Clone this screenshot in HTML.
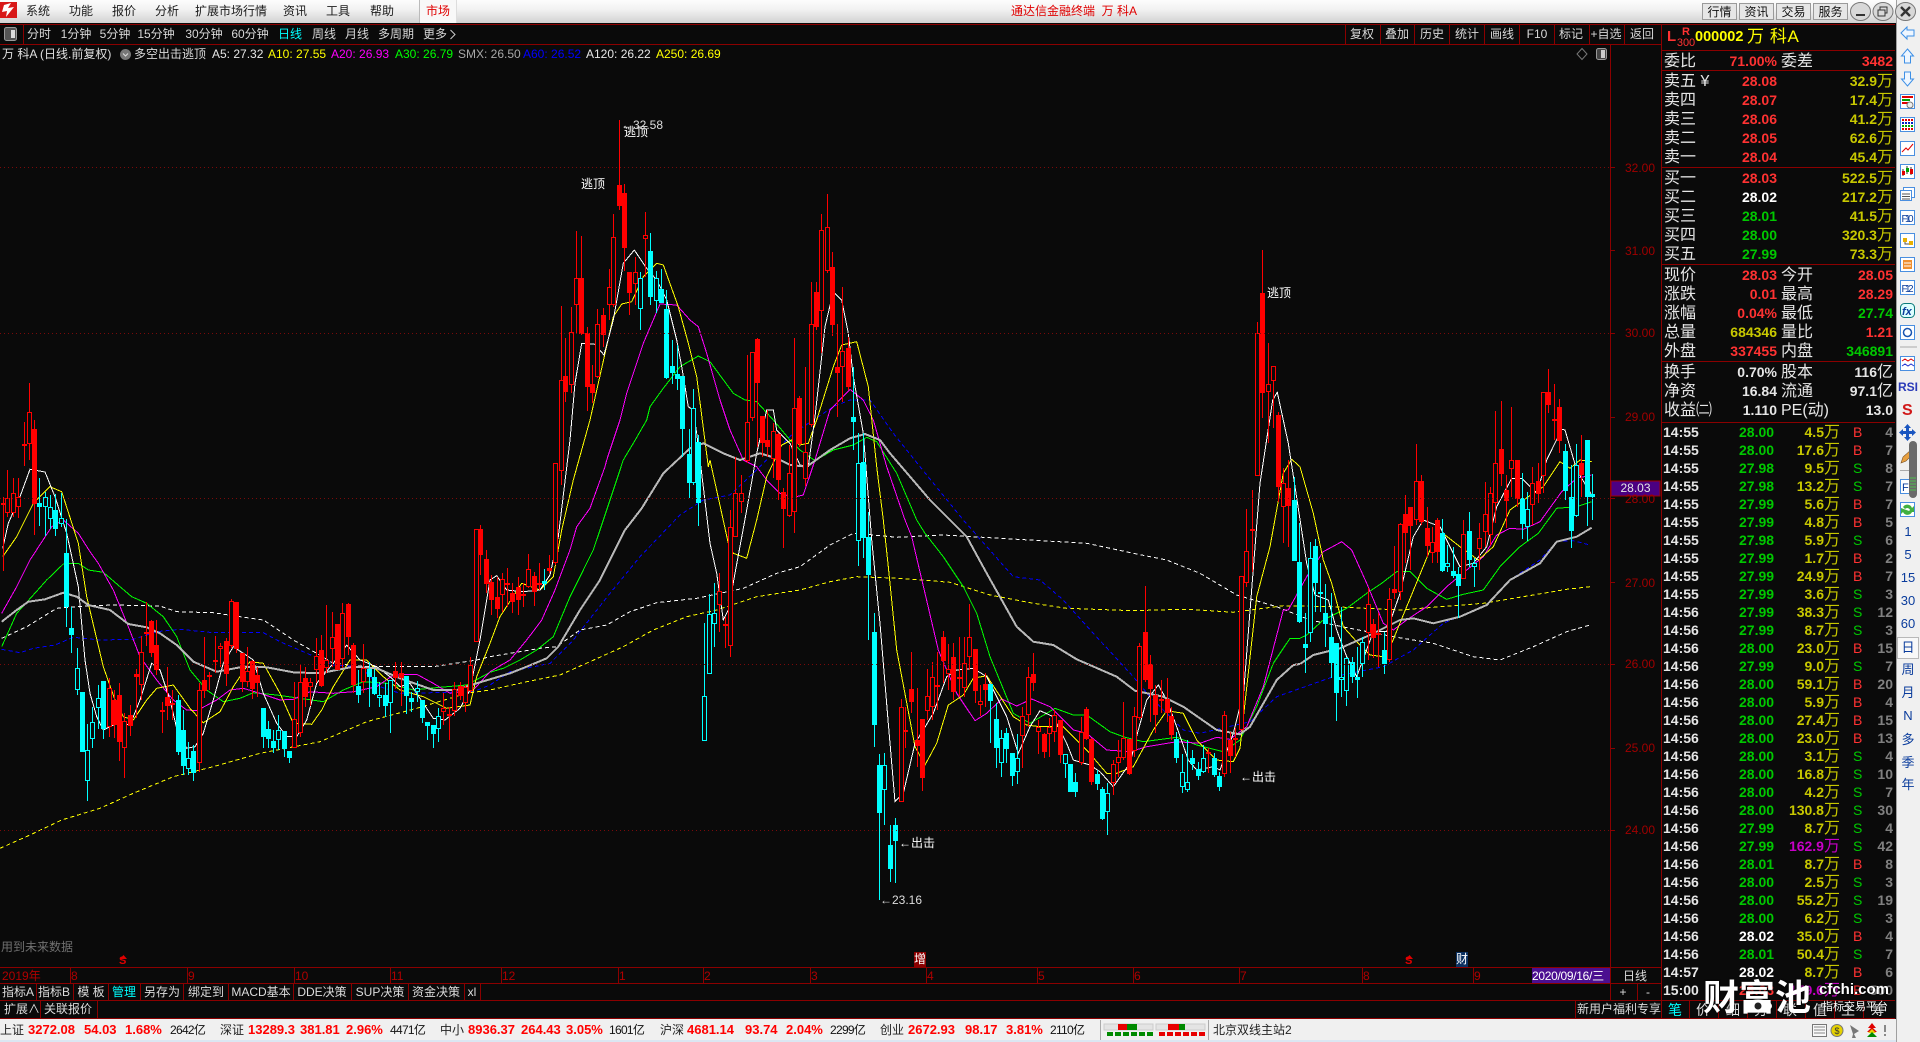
<!DOCTYPE html>
<html lang="zh"><head><meta charset="utf-8"><title>通达信金融终端 万科A</title>
<style>
html,body{margin:0;padding:0;width:1920px;height:1042px;overflow:hidden;background:#0a0a0a}
body{position:relative;font:12px/16px "Liberation Sans","WenQuanYi Zen Hei","Noto Sans CJK SC",sans-serif;color:#e0e0e0}
.x{position:absolute;white-space:nowrap;z-index:5}
.c{transform:translateX(-50%)}
#title{position:absolute;left:0;top:0;width:1920px;height:23px;background:linear-gradient(#fdfdfd,#f2f2f2 40%,#d2d2d2)}
.m{top:3px;color:#1a1a1a}
.tb{top:26px;color:#d8d8d8}
.tr{top:26px;color:#d8d8d8}
.btn{position:absolute;top:3px;height:17px;line-height:17px;text-align:center;background:#e6e6e6;border:1px solid #9a9a9a;box-sizing:border-box;color:#111;z-index:5}
.lg{top:46px}
.tab{top:984px;color:#dcdcdc}
.dt{top:968px;color:#b00000}
.ax{left:1625px;color:#a00000;font-size:12px}
.lb{font-size:16px;line-height:18px;color:#e6e6e6;margin-top:1px}
.q{font-size:14px;line-height:18px;font-weight:bold;color:#ff3232}
.pr{right:143px}.vr{right:27px}
.y{color:#c8c800}.g{color:#00c800}.w{color:#e6e6e6}.mg{color:#c800c8}
.q span{font-weight:normal;font-size:16px}
.t{position:absolute;left:1662px;width:233px;height:18px;font-size:14px;line-height:18px;font-weight:bold;z-index:5}
.t i,.t b,.t u,.t em,.t s{position:absolute;font-style:normal;text-decoration:none;white-space:nowrap}
.t i{left:1px;color:#e6e6e6}
.t b{left:77px;color:#00c800}
.t b.w{color:#fff}.t b.rd{color:#ff3232}
.t u{right:55px;color:#c8c800}
.t u.mg{color:#c800c8}
.t u span{font-weight:normal;font-size:16px}
.t em{left:191px;color:#ff3232;font-size:14px;font-weight:normal}
.t em.g{color:#00c800}
.t s{right:2px;color:#808080;font-weight:bold}
.lab{color:#fff;font-size:12px}
#status{position:absolute;left:0;top:1019px;width:1896px;height:21px;background:#f0f0f0}
#bot{position:absolute;left:0;top:1040px;width:1920px;height:2px;background:#dbe6f2}
.st{top:1022px;color:#222}
.sr{top:1022px;color:#f00;font-weight:bold;font-size:13px}
.sv{top:1022px;color:#111;letter-spacing:-.7px}
#side{position:absolute;left:1896px;top:0;width:24px;height:1042px;background:#f0f0f0;border-left:1px solid #a0a0a0;box-sizing:border-box}
.sd{left:1896px;width:24px;text-align:center;color:#0a3c9c;font-size:13px;z-index:6}
.tabb{top:1002px;color:#e0e0e0;font-size:14px}
.wm{color:#fff;z-index:9;text-shadow:0 0 2px #000}
</style></head><body>

<div id="title"></div>
<svg class="x" style="left:0;top:2px" width="17" height="16"><rect width="17" height="16" fill="#d81818"/><path d="M4 3L11 1L8 6L14 5L6 15L7 9L2 10Z" fill="#fff"/></svg>
<span class="x m c" style="left:38px">系统</span><span class="x m c" style="left:81px">功能</span><span class="x m c" style="left:124px">报价</span><span class="x m c" style="left:167px">分析</span><span class="x m c" style="left:231px">扩展市场行情</span><span class="x m c" style="left:295px">资讯</span><span class="x m c" style="left:338px">工具</span><span class="x m c" style="left:382px">帮助</span>
<div style="position:absolute;left:419px;top:0;width:38px;height:23px;background:#f8f8f8;border-left:1px solid #bbb;border-right:1px solid #ddd;box-sizing:border-box"></div>
<span class="x m c" style="left:438px;color:#e00000">市场</span>
<span class="x m" style="left:1011px;color:#e00000">通达信金融终端&nbsp;&nbsp;万 科A</span>
<div class="btn" style="left:1702px;width:35px">行情</div><div class="btn" style="left:1739px;width:35px">资讯</div><div class="btn" style="left:1776px;width:35px">交易</div><div class="btn" style="left:1813px;width:35px">服务</div>
<svg class="x" style="left:1849px;top:1px" width="70" height="22">
<ellipse cx="11.5" cy="10.5" rx="10" ry="9" fill="#d8d8d8" stroke="#777"/><rect x="7" y="13" width="9" height="2" fill="#333"/>
<ellipse cx="34" cy="10.5" rx="10" ry="9" fill="#d8d8d8" stroke="#777"/><rect x="31" y="6" width="7" height="6" fill="none" stroke="#333"/><rect x="29" y="9" width="7" height="6" fill="#d8d8d8" stroke="#333"/>
<ellipse cx="56.5" cy="10.5" rx="10" ry="9" fill="#d8d8d8" stroke="#777"/><path d="M52 6L61 15M61 6L52 15" stroke="#333" stroke-width="2.4"/></svg>

<svg id="chart" style="position:absolute;left:0;top:45px" width="1610" height="922" viewBox="0 45 1610 922"></svg>

<svg style="position:absolute;left:0;top:0;z-index:3" width="1896" height="1042" shape-rendering="crispEdges">
<path d="M0 167.5H1610M0 333.5H1610M0 498.5H1610M0 664.5H1610M0 830.5H1610" stroke="#7a0a0a" stroke-dasharray="1 3" fill="none"/>
<path fill="none" stroke="#8b0000" d="M0 24.5H1895M0 44.5H1661M23.5 24V44M1345.5 24V44M1380.5 24V44M1414.5 24V44M1449.5 24V44M1484.5 24V44M1519.5 24V44M1554.5 24V44M1589.5 24V44M1624.5 24V44M1610.5 44V1001M1661.5 24V1018M0 967.5H1661M0 983.5H1661M0 1000.5H1895M0 1018.5H1895M1661 50.5H1895M1661 70.5H1895M1661 167.5H1895M1661 264.5H1895M1661 361.5H1895M1661 422.5H1895M36.5 984V1000M73.5 984V1000M108.5 984V1000M140.5 984V1000M183.5 984V1000M228.5 984V1000M293.5 984V1000M351.5 984V1000M408.5 984V1000M464.5 984V1000M480.5 984V1000M40.5 1001V1018M97.5 1001V1018M1575.5 1001V1018M1637.5 984V1000M70.5 968V983M187.5 968V983M294.5 968V983M390.5 968V983M501.5 968V983M618.5 968V983M703.5 968V983M810.5 968V983M926.5 968V983M1037.5 968V983M1133.5 968V983M1239.5 968V983M1362.5 968V983M1473.5 968V983M1689.5 1001V1018M1718.5 1001V1018M1747.5 1001V1018M1776.5 1001V1018M1805.5 1001V1018M1834.5 1001V1018M1863.5 1001V1018M1610 167.5H1615M1610 250.5H1615M1610 333.5H1615M1610 417.5H1615M1610 498.5H1615M1610 582.5H1615M1610 664.5H1615M1610 748.5H1615M1610 830.5H1615"/>
<rect x="1532" y="968" width="78" height="15" fill="#4b0f90"/>
<rect x="1611" y="481" width="49" height="15" fill="#4b0082" stroke="#a00000"/>
</svg>

<svg class="x" style="left:4px;top:27px" width="14" height="14"><rect x=".5" y=".5" width="12" height="13" rx="2" fill="#555" stroke="#9a9a9a"/><rect x="7" y="3" width="4" height="8" fill="#ddd"/></svg>
<span class="x tb c" style="left:39px">分时</span><span class="x tb c" style="left:76px">1分钟</span><span class="x tb c" style="left:115px">5分钟</span><span class="x tb c" style="left:156px">15分钟</span><span class="x tb c" style="left:204px">30分钟</span><span class="x tb c" style="left:250px">60分钟</span><span class="x tb c" style="left:290px;color:#00ffff">日线</span><span class="x tb c" style="left:324px">周线</span><span class="x tb c" style="left:357px">月线</span><span class="x tb c" style="left:396px">多周期</span><span class="x tb c" style="left:435px">更多</span>
<svg class="x" style="left:449px;top:29px" width="8" height="11"><path d="M1.500 1L6 5.500L1.500 10" stroke="#ccc" fill="none"/></svg>
<span class="x tr c" style="left:1362px">复权</span><span class="x tr c" style="left:1397px">叠加</span><span class="x tr c" style="left:1432px">历史</span><span class="x tr c" style="left:1467px">统计</span><span class="x tr c" style="left:1502px">画线</span><span class="x tr c" style="left:1537px">F10</span><span class="x tr c" style="left:1571px">标记</span><span class="x tr c" style="left:1606px">+自选</span><span class="x tr c" style="left:1642px">返回</span>

<span class="x lg" style="left:2px;color:#e0e0e0">万 科A (日线.前复权)</span>
<svg class="x" style="left:119px;top:48px" width="13" height="13"><circle cx="6.500" cy="6.500" r="5.500" fill="#777"/><path d="M4 5.500L6.500 8L9 5.500" stroke="#ddd" fill="none"/></svg>
<span class="x lg" style="left:134px;color:#d8d8d8">多空出击逃顶</span>
<span class="x lg" style="left:212px;color:#e6e6e6">A5: 27.32</span><span class="x lg" style="left:268px;color:#ff0">A10: 27.55</span><span class="x lg" style="left:331px;color:#f0f">A20: 26.93</span><span class="x lg" style="left:395px;color:#0f0">A30: 26.79</span><span class="x lg" style="left:458px;color:#a8a8a8">SMX: 26.50</span><span class="x lg" style="left:523px;color:#00f">A60: 26.52</span><span class="x lg" style="left:586px;color:#e6e6e6">A120: 26.22</span><span class="x lg" style="left:656px;color:#ff0">A250: 26.69</span>
<svg class="x" style="left:1576px;top:47px" width="34" height="14"><path d="M6 1.500L11 7L6 12.500L1 7Z" fill="none" stroke="#777"/><rect x="20.500" y="1.500" width="10" height="11" rx="2" fill="#444" stroke="#999"/><rect x="25" y="3" width="4" height="8" fill="#ccc"/></svg>

<span class="x ax" style="top:160px">32.00</span><span class="x ax" style="top:243px">31.00</span><span class="x ax" style="top:325px">30.00</span><span class="x ax" style="top:409px">29.00</span><span class="x ax" style="top:491px">28.00</span><span class="x ax" style="top:575px">27.00</span><span class="x ax" style="top:656px">26.00</span><span class="x ax" style="top:740px">25.00</span><span class="x ax" style="top:822px">24.00</span>
<span class="x" style="left:1611px;top:480px;width:49px;text-align:center;color:#e6e6e6">28.03</span>

<span class="x lab" style="left:581px;top:176px">逃顶</span><span class="x lab" style="left:624px;top:124px">逃顶</span><span class="x lab" style="left:621px;top:117px;color:#ddd">←32.58</span><span class="x lab" style="left:1267px;top:285px">逃顶</span><span class="x lab" style="left:899px;top:835px">←出击</span><span class="x lab" style="left:1240px;top:769px">←出击</span><span class="x lab" style="left:880px;top:892px;color:#ddd">←23.16</span>
<span class="x" style="left:1px;top:939px;color:#707070">用到未来数据</span>

<span class="x" style="left:119px;top:955px;color:#e00000;font-weight:bold;font-size:11px;line-height:12px">S</span><svg class="x" style="left:120px;top:955px" width="7" height="4"><path d="M0 4L3.500 0L7 4Z" fill="#e00000"/></svg>
<span class="x" style="left:914px;top:952px;background:#8b0000;color:#fff;height:15px;line-height:15px">增</span>
<span class="x" style="left:1405px;top:955px;color:#e00000;font-weight:bold;font-size:11px;line-height:12px">S</span><svg class="x" style="left:1406px;top:955px" width="7" height="4"><path d="M0 4L3.500 0L7 4Z" fill="#e00000"/></svg>
<span class="x" style="left:1456px;top:952px;background:#0a3060;color:#fff;height:15px;line-height:15px">财</span>

<span class="x dt" style="left:2px">2019年</span><span class="x dt" style="left:71px">8</span><span class="x dt" style="left:188px">9</span><span class="x dt" style="left:295px">10</span><span class="x dt" style="left:391px">11</span><span class="x dt" style="left:502px">12</span><span class="x dt" style="left:619px">1</span><span class="x dt" style="left:704px">2</span><span class="x dt" style="left:811px">3</span><span class="x dt" style="left:927px">4</span><span class="x dt" style="left:1038px">5</span><span class="x dt" style="left:1134px">6</span><span class="x dt" style="left:1240px">7</span><span class="x dt" style="left:1363px">8</span><span class="x dt" style="left:1474px">9</span>
<span class="x" style="left:1532px;top:968px;color:#fff;letter-spacing:-.3px">2020/09/16/三</span><span class="x c" style="left:1635px;top:968px;color:#ddd">日线</span>
<span class="x tab" style="left:2px">指标A</span><span class="x tab" style="left:38px">指标B</span><span class="x tab c" style="left:91px">模 板</span><span class="x tab c" style="left:124px;color:#00ffff">管理</span><span class="x tab c" style="left:162px">另存为</span><span class="x tab c" style="left:206px">绑定到</span><span class="x tab c" style="left:261px">MACD基本</span><span class="x tab c" style="left:322px">DDE决策</span><span class="x tab c" style="left:380px">SUP决策</span><span class="x tab c" style="left:436px">资金决策</span><span class="x tab c" style="left:472px">xl</span>
<span class="x c" style="left:1623px;top:984px;color:#ddd">+</span><span class="x c" style="left:1648px;top:984px;color:#ddd">-</span>
<span class="x" style="left:4px;top:1001px;color:#dcdcdc">扩展∧</span><span class="x" style="left:44px;top:1001px;color:#dcdcdc">关联报价</span><span class="x" style="left:1577px;top:1001px;color:#dcdcdc">新用户福利专享</span>

<span class="x" style="left:1667px;top:29px;color:#ff3232;font-size:15px;font-weight:bold">L</span>
<span class="x c" style="left:1686px;top:24px;color:#ff3232;font-weight:bold;font-size:11px">R</span><span class="x c" style="left:1686px;top:35px;color:#ff3232;font-size:11px">300</span>
<span class="x" style="left:1695px;top:29px;color:#ff0;font-size:14.500px;font-weight:bold">000002</span><span class="x" style="left:1747px;top:28px;color:#ff0;font-size:17px;line-height:18px;letter-spacing:.6px">万 科A</span>

<span class="x lb" style="left:1664px;top:52px">委比</span><span class="x q pr" style="top:52px">71.00%</span><span class="x lb" style="left:1781px;top:52px">委差</span><span class="x q vr" style="top:52px">3482</span>
<span class="x lb" style="left:1664px;top:72px">卖五 ¥</span><span class="x q pr" style="top:72px">28.08</span><span class="x q vr y" style="top:72px">32.9<span>万</span></span>
<span class="x lb" style="left:1664px;top:91px">卖四</span><span class="x q pr" style="top:91px">28.07</span><span class="x q vr y" style="top:91px">17.4<span>万</span></span>
<span class="x lb" style="left:1664px;top:110px">卖三</span><span class="x q pr" style="top:110px">28.06</span><span class="x q vr y" style="top:110px">41.2<span>万</span></span>
<span class="x lb" style="left:1664px;top:129px">卖二</span><span class="x q pr" style="top:129px">28.05</span><span class="x q vr y" style="top:129px">62.6<span>万</span></span>
<span class="x lb" style="left:1664px;top:148px">卖一</span><span class="x q pr" style="top:148px">28.04</span><span class="x q vr y" style="top:148px">45.4<span>万</span></span>
<span class="x lb" style="left:1664px;top:169px">买一</span><span class="x q pr" style="top:169px">28.03</span><span class="x q vr y" style="top:169px">522.5<span>万</span></span>
<span class="x lb" style="left:1664px;top:188px">买二</span><span class="x q pr w" style="top:188px;color:#fff">28.02</span><span class="x q vr y" style="top:188px">217.2<span>万</span></span>
<span class="x lb" style="left:1664px;top:207px">买三</span><span class="x q pr g" style="top:207px">28.01</span><span class="x q vr y" style="top:207px">41.5<span>万</span></span>
<span class="x lb" style="left:1664px;top:226px">买四</span><span class="x q pr g" style="top:226px">28.00</span><span class="x q vr y" style="top:226px">320.3<span>万</span></span>
<span class="x lb" style="left:1664px;top:245px">买五</span><span class="x q pr g" style="top:245px">27.99</span><span class="x q vr y" style="top:245px">73.3<span>万</span></span>
<span class="x lb" style="left:1664px;top:266px">现价</span><span class="x q pr" style="top:266px">28.03</span><span class="x lb" style="left:1781px;top:266px">今开</span><span class="x q vr" style="top:266px">28.05</span>
<span class="x lb" style="left:1664px;top:285px">涨跌</span><span class="x q pr" style="top:285px">0.01</span><span class="x lb" style="left:1781px;top:285px">最高</span><span class="x q vr" style="top:285px">28.29</span>
<span class="x lb" style="left:1664px;top:304px">涨幅</span><span class="x q pr" style="top:304px">0.04%</span><span class="x lb" style="left:1781px;top:304px">最低</span><span class="x q vr g" style="top:304px">27.74</span>
<span class="x lb" style="left:1664px;top:323px">总量</span><span class="x q pr y" style="top:323px">684346</span><span class="x lb" style="left:1781px;top:323px">量比</span><span class="x q vr" style="top:323px">1.21</span>
<span class="x lb" style="left:1664px;top:342px">外盘</span><span class="x q pr" style="top:342px">337455</span><span class="x lb" style="left:1781px;top:342px">内盘</span><span class="x q vr g" style="top:342px">346891</span>
<span class="x lb" style="left:1664px;top:363px">换手</span><span class="x q pr w" style="top:363px">0.70%</span><span class="x lb" style="left:1781px;top:363px">股本</span><span class="x q vr w" style="top:363px">116<span>亿</span></span>
<span class="x lb" style="left:1664px;top:382px">净资</span><span class="x q pr w" style="top:382px">16.84</span><span class="x lb" style="left:1781px;top:382px">流通</span><span class="x q vr w" style="top:382px">97.1<span>亿</span></span>
<span class="x lb" style="left:1664px;top:401px">收益㈡</span><span class="x q pr w" style="top:401px">1.110</span><span class="x lb" style="left:1781px;top:401px">PE(动)</span><span class="x q vr w" style="top:401px">13.0</span>

<div class="t" style="top:423px"><i>14:55</i><b>28.00</b><u>4.5<span>万</span></u><em>B</em><s>4</s></div>
<div class="t" style="top:441px"><i>14:55</i><b>28.00</b><u>17.6<span>万</span></u><em>B</em><s>7</s></div>
<div class="t" style="top:459px"><i>14:55</i><b>27.98</b><u>9.5<span>万</span></u><em class="g">S</em><s>8</s></div>
<div class="t" style="top:477px"><i>14:55</i><b>27.98</b><u>13.2<span>万</span></u><em class="g">S</em><s>7</s></div>
<div class="t" style="top:495px"><i>14:55</i><b>27.99</b><u>5.6<span>万</span></u><em>B</em><s>7</s></div>
<div class="t" style="top:513px"><i>14:55</i><b>27.99</b><u>4.8<span>万</span></u><em>B</em><s>5</s></div>
<div class="t" style="top:531px"><i>14:55</i><b>27.98</b><u>5.9<span>万</span></u><em class="g">S</em><s>6</s></div>
<div class="t" style="top:549px"><i>14:55</i><b>27.99</b><u>1.7<span>万</span></u><em>B</em><s>2</s></div>
<div class="t" style="top:567px"><i>14:55</i><b>27.99</b><u>24.9<span>万</span></u><em>B</em><s>7</s></div>
<div class="t" style="top:585px"><i>14:55</i><b>27.99</b><u>3.6<span>万</span></u><em class="g">S</em><s>3</s></div>
<div class="t" style="top:603px"><i>14:56</i><b>27.99</b><u>38.3<span>万</span></u><em class="g">S</em><s>12</s></div>
<div class="t" style="top:621px"><i>14:56</i><b>27.99</b><u>8.7<span>万</span></u><em class="g">S</em><s>3</s></div>
<div class="t" style="top:639px"><i>14:56</i><b>28.00</b><u>23.0<span>万</span></u><em>B</em><s>15</s></div>
<div class="t" style="top:657px"><i>14:56</i><b>27.99</b><u>9.0<span>万</span></u><em class="g">S</em><s>7</s></div>
<div class="t" style="top:675px"><i>14:56</i><b>28.00</b><u>59.1<span>万</span></u><em>B</em><s>20</s></div>
<div class="t" style="top:693px"><i>14:56</i><b>28.00</b><u>5.9<span>万</span></u><em>B</em><s>4</s></div>
<div class="t" style="top:711px"><i>14:56</i><b>28.00</b><u>27.4<span>万</span></u><em>B</em><s>15</s></div>
<div class="t" style="top:729px"><i>14:56</i><b>28.00</b><u>23.0<span>万</span></u><em>B</em><s>13</s></div>
<div class="t" style="top:747px"><i>14:56</i><b>28.00</b><u>3.1<span>万</span></u><em class="g">S</em><s>4</s></div>
<div class="t" style="top:765px"><i>14:56</i><b>28.00</b><u>16.8<span>万</span></u><em class="g">S</em><s>10</s></div>
<div class="t" style="top:783px"><i>14:56</i><b>28.00</b><u>4.2<span>万</span></u><em class="g">S</em><s>7</s></div>
<div class="t" style="top:801px"><i>14:56</i><b>28.00</b><u>130.8<span>万</span></u><em class="g">S</em><s>30</s></div>
<div class="t" style="top:819px"><i>14:56</i><b>27.99</b><u>8.7<span>万</span></u><em class="g">S</em><s>4</s></div>
<div class="t" style="top:837px"><i>14:56</i><b>27.99</b><u class="mg">162.9<span>万</span></u><em class="g">S</em><s>42</s></div>
<div class="t" style="top:855px"><i>14:56</i><b>28.01</b><u>8.7<span>万</span></u><em>B</em><s>8</s></div>
<div class="t" style="top:873px"><i>14:56</i><b>28.00</b><u>2.5<span>万</span></u><em class="g">S</em><s>3</s></div>
<div class="t" style="top:891px"><i>14:56</i><b>28.00</b><u>55.2<span>万</span></u><em class="g">S</em><s>19</s></div>
<div class="t" style="top:909px"><i>14:56</i><b>28.00</b><u>6.2<span>万</span></u><em class="g">S</em><s>3</s></div>
<div class="t" style="top:927px"><i>14:56</i><b class="w">28.02</b><u>35.0<span>万</span></u><em>B</em><s>4</s></div>
<div class="t" style="top:945px"><i>14:56</i><b>28.01</b><u>50.4<span>万</span></u><em class="g">S</em><s>7</s></div>
<div class="t" style="top:963px"><i>14:57</i><b class="w">28.02</b><u>8.7<span>万</span></u><em>B</em><s>6</s></div>
<div class="t" style="top:981px"><i>15:00</i><b class="rd">28.03</b><u class="mg">179.6<span>万</span></u><em>B</em><s>500</s></div>

<span class="x tabb c" style="left:1675px;color:#00ffff">笔</span><span class="x tabb c" style="left:1703px">价</span><span class="x tabb c" style="left:1733px">细</span><span class="x tabb c" style="left:1761px">分</span><span class="x tabb c" style="left:1790px">联</span><span class="x tabb c" style="left:1820px">值</span><span class="x tabb c" style="left:1848px">主</span><span class="x tabb c" style="left:1878px">筹</span>

<span class="x wm" style="left:1703px;top:972px;font:bold 36px/46px 'Noto Sans CJK SC',sans-serif">财富池</span>
<svg class="x" style="left:1743px;top:999px;z-index:9" width="30" height="14"><ellipse cx="15" cy="7" rx="14" ry="6.500" fill="#fff"/><circle cx="15" cy="7" r="3.500" fill="#222"/></svg>
<span class="x wm" style="left:1819px;top:981px;font:bold 15px/18px 'Liberation Sans',sans-serif">cfchi.com</span>
<span class="x wm" style="left:1822px;top:1000px;font-size:11px;line-height:14px">指标交易平台</span>

<div id="status"></div><div id="bot"></div>
<span class="x st" style="left:0">上证</span><span class="x sr" style="left:28px">3272.08</span><span class="x sr" style="left:84px">54.03</span><span class="x sr" style="left:125px">1.68%</span><span class="x sv" style="left:170px">2642亿</span>
<span class="x st" style="left:220px">深证</span><span class="x sr" style="left:248px">13289.3</span><span class="x sr" style="left:300px">381.81</span><span class="x sr" style="left:346px">2.96%</span><span class="x sv" style="left:390px">4471亿</span>
<span class="x st" style="left:440px">中小</span><span class="x sr" style="left:468px">8936.37</span><span class="x sr" style="left:521px">264.43</span><span class="x sr" style="left:566px">3.05%</span><span class="x sv" style="left:609px">1601亿</span>
<span class="x st" style="left:660px">沪深</span><span class="x sr" style="left:687px">4681.14</span><span class="x sr" style="left:745px">93.74</span><span class="x sr" style="left:786px">2.04%</span><span class="x sv" style="left:830px">2299亿</span>
<span class="x st" style="left:880px">创业</span><span class="x sr" style="left:908px">2672.93</span><span class="x sr" style="left:965px">98.17</span><span class="x sr" style="left:1006px">3.81%</span><span class="x sv" style="left:1050px">2110亿</span>
<span class="x st" style="left:1213px">北京双线主站2</span>
<svg class="x" style="left:1100px;top:1020px" width="110" height="20" shape-rendering="crispEdges">
<path d="M.5 0V20M108.500 0V20" stroke="#aaa"/>
<rect x="4" y="4" width="49" height="6" fill="#e4e4e4" stroke="#ccc"/><rect x="18" y="4" width="9" height="6" fill="#e80000"/><rect x="27" y="4" width="10" height="6" fill="#008a00"/>
<rect x="56" y="4" width="49" height="6" fill="#e4e4e4" stroke="#ccc"/><rect x="68" y="4" width="11" height="6" fill="#e80000"/><rect x="79" y="4" width="6" height="6" fill="#008a00"/>
<path d="M7 14H53" stroke="#008a00" stroke-width="4" stroke-dasharray="6 2"/><path d="M59 14H105" stroke="#e80000" stroke-width="4" stroke-dasharray="6 2"/></svg>
<svg class="x" style="left:1810px;top:1022px" width="82" height="18">
<rect x="2.500" y="2.500" width="14" height="12" fill="#f8f8f8" stroke="#777"/><path d="M4 5H15M4 8H15M4 11H15" stroke="#888"/>
<circle cx="27" cy="8.500" r="6" fill="#e6d200" stroke="#777"/><text x="24.500" y="12" font-size="9" fill="#333" font-family="Liberation Sans">$</text>
<path d="M40 3L49 9L44 12L46 16H42L43 12Z" fill="#777"/>
<path d="M62 1L66 6H58ZM62 5L67 10H57Z" fill="#e00000"/><path d="M62 7L66 11H58Z" fill="#e8d000"/><path d="M62 10L67 15H57Z" fill="#008a00"/>
<rect x="74" y="3" width="2" height="7" fill="#888"/><rect x="74" y="12" width="2" height="2" fill="#888"/></svg>

<div id="side"></div>
<svg class="x" style="left:1896px;top:0;z-index:6" width="24" height="1042" font-family="Liberation Sans">
<g fill="#eef6ff" stroke="#3d8fe6"><path d="M5 33L11 27V30H18V36H11V39Z"/><path d="M11.500 49L17.500 56H14.500V63H8.500V56H5.500Z"/><path d="M8.500 72H14.500V79H17.500L11.500 86L5.500 79H8.500Z"/></g>
<g fill="#fff" stroke="#4a8fe0"><rect x="4.500" y="94.500" width="14" height="14"/><rect x="4.500" y="117.500" width="14" height="14"/><rect x="4.500" y="141.500" width="14" height="14"/><rect x="4.500" y="164.500" width="14" height="14"/><rect x="7.500" y="187.500" width="11" height="10"/><rect x="4.500" y="190.500" width="11" height="10"/><rect x="4.500" y="210.500" width="14" height="14"/><rect x="4.500" y="233.500" width="14" height="14"/><rect x="4.500" y="257.500" width="14" height="14"/><rect x="4.500" y="280.500" width="14" height="14"/><rect x="4.500" y="325.500" width="14" height="14"/><rect x="4.500" y="356.500" width="14" height="14"/><rect x="4.500" y="479.500" width="14" height="14"/><rect x="4.500" y="502.500" width="14" height="14"/></g>
<path d="M6 97H17" stroke="#e00000" stroke-width="2"/><path d="M6 100H14" stroke="#00a000" stroke-width="2"/><path d="M6 103H12" stroke="#e00000" stroke-width="2"/><circle cx="14" cy="105" r="3" fill="#eee" stroke="#777"/>
<path d="M6 120H17" stroke="#e00000" stroke-width="2" stroke-dasharray="2 1"/><path d="M6 123H17" stroke="#0020c0" stroke-width="2" stroke-dasharray="2 1"/><path d="M6 126H17" stroke="#00a000" stroke-width="2" stroke-dasharray="2 1"/><path d="M6 129H17" stroke="#e00000" stroke-width="2" stroke-dasharray="2 1"/>
<path d="M6 152L10 148L12 150L17 144" stroke="#e00000" fill="none"/>
<path d="M7 169V176M11 166V174M15 167V175" stroke="#333"/><rect x="6" y="171" width="3" height="4" fill="#e00000"/><rect x="10" y="168" width="3" height="4" fill="#00a000"/><rect x="14" y="169" width="3" height="5" fill="#e00000"/>
<path d="M6 194H14M6 196.500H14M6 199H14" stroke="#555"/>
<text x="5.500" y="222" font-size="10" fill="#0a3c9c" textLength="12">F10</text>
<path d="M7 238H11V242H7ZM13 241H17V245H13Z" fill="#e8b000"/><path d="M9 242V244H13" stroke="#555" fill="none"/>
<rect x="7" y="260" width="9" height="9" fill="#f09030"/><path d="M8 263H15M8 266H15" stroke="#fff"/>
<text x="5.500" y="292" font-size="10" fill="#0a3c9c" textLength="12">F12</text>
<rect x="4.500" y="303.500" width="14" height="14" rx="4" fill="#dff" stroke="#0a7a7a"/><text x="6" y="315" font-size="11" font-style="italic" font-weight="bold" fill="#0a3c9c">fx</text>
<circle cx="11.500" cy="332.500" r="4" fill="none" stroke="#1a55b0" stroke-width="1.500"/>
<path d="M4 347H21M4 470.500H21" stroke="#aaa"/>
<path d="M6 361L9 359L12 361L15 359L18 361" stroke="#e00000" fill="none"/><path d="M6 366L9 364L12 366L15 364L18 366" stroke="#2030d0" fill="none"/>
<text x="2" y="391" font-size="12" font-weight="bold" fill="#2a3ab8">RSI</text>
<text x="6" y="415" font-size="16" font-weight="bold" fill="#d01818">S</text>
<path d="M11.500 424L15 428H13V431H16V429L20 432.500L16 436V434H13V437H15L11.500 441L8 437H10V434H7V436L3 432.500L7 429V431H10V428H8Z" fill="#1a55c0"/>
<path d="M5 463L7 457L16 449L19 452L10 461Z" fill="#e8a040" stroke="#7a5020" stroke-width=".6"/>
<text x="6" y="491" font-size="11" fill="#0a3c9c">F5</text>
<path d="M7 507A5 5 0 0 1 16 508L18 506V512H12L14 510A3 3 0 0 0 9 509ZM16 512A5 5 0 0 1 7 512L5 514V508" fill="#40b040"/>
<rect x="13" y="441" width="8" height="57" rx="4" fill="#6a6a6a"/><path d="M14 478H20M14 481H20M14 484H20M14 487H20M14 490H20" stroke="#50c050"/>
<rect x="1.500" y="637.500" width="21" height="21" fill="#f8f8f8" stroke="#b8b8b8"/>
</svg>
<span class="x sd" style="top:524px">1</span><span class="x sd" style="top:547px">5</span><span class="x sd" style="top:570px">15</span><span class="x sd" style="top:593px">30</span><span class="x sd" style="top:616px">60</span><span class="x sd" style="top:640px">日</span><span class="x sd" style="top:662px">周</span><span class="x sd" style="top:685px">月</span><span class="x sd" style="top:708px">N</span><span class="x sd" style="top:732px">多</span><span class="x sd" style="top:755px">季</span><span class="x sd" style="top:777px">年</span>

<script>
(function(){
var S={a:[0,400],b:[500,100],c:[800,500],d:[1200,230],e:[490,420]};
var BARS=[
["a","r8,292,310,313,512 h22,210,295,338,350 h39,235,280,338,350 h55,235,290,320,355 r71,65,132,136,197 h88,-50,37,133,180 r103,60,87,312,405 c118,235,309,321,378 n136,275,292,322,408 n150,285,322,358,388 c165,283,330,387,408 n184,280,355,373,380 c199,358,460,620,680 c214,620,684,704,758 n232,745,805,870,885 c247,876,876,1055,1055 n262,972,1051,1144,1202 n277,920,967,1018,1043 n295,855,895,925,987 c310,843,843,986,1016 h326,835,865,980,1010 r343,870,900,975,1015 r358,850,885,1025,1082 h373,940,962,1045,1133 r391,915,945,977,1007 r407,808,822,830,955 h422,708,757,854,900 r439,607,696,700,738 r454,660,663,758,770 r469,660,736,810,825 r487,905,930,934,998 r502,800,892,918,960 r517,870,908,911,960 c535,885,900,1055,1065 c550,930,990,1097,1125 n565,1025,1075,1108,1125 c580,1035,1053,1120,1143 h598,850,871,1090,1115 r613,710,840,872,895 r628,815,825,830,870 r646,708,781,784,820 h661,730,738,748,800 r677,715,724,821,858 h694,598,604,738,745 r708,605,606,747,760 r725,760,760,845,875 h742,740,813,845,860 r757,780,783,866,898 r772,800,825,850,890 c790,924,924,1010,1043 c805,963,987,1017,1045 c820,990,1023,1044,1058 n835,945,991,1021,1050 c853,993,993,1047,1072 c868,1053,1053,1074,1090 h883,845,958,1045,1045 h901,793,847,1000,1010 r916,800,835,892,920 h931,835,845,862,918 h949,715,768,811,850 r964,705,750,857,860 h979,615,780,805,820 h997,635,712,748,800 r1012,672,672,810,810 h1027,610,640,778,805 r1045,610,612,710,765 r1060,728,736,854,878 c1075,810,858,885,908 h1090,733,805,845,880 c1108,785,806,832,920 c1123,808,832,882,885 n1138,845,885,893,920 c1156,850,885,917,950 n1171,840,840,908,998 r1186,787,813,835,868 r1204,787,820,835,918 c1219,828,828,888,942 c1234,875,894,906,937 n1252,843,863,876,905 c1267,900,900,953,968 c1282,966,966,977,1020 c1300,975,975,1002,1044 n1315,925,948,988,1027 h1330,880,925,937,975 r1346,920,943,947,1020 h1363,845,868,932,948 r1379,845,858,888,900 h1394,855,860,910,935 h1411,770,795,873,880 h1427,388,388,725,725 r1441,375,388,464,525 r1459,450,477,551,580 r1474,525,545,600,645 r1490,530,591,627,655"],
["e","h37,460,478,524,575 r52,445,490,495,560 r67,490,520,545,578 r85,470,502,540,586 r100,490,521,524,560 h115,403,447,500,505 r133,455,468,515,557 r148,430,490,494,510 c163,447,483,491,510 r178,405,444,452,460 h196,130,130,430,435"],
["b","h182,618,841,1114,1155 r196,714,828,875,905 h214,622,697,854,878 h229,393,535,616,700 r244,408,535,701,705 r262,680,699,860,933 r277,795,852,880,908 h292,628,673,830,835 r310,625,645,705,740 h326,507,562,616,660 h340,342,412,616,620 r358,60,255,317,330 r373,252,279,443,512 r388,516,516,578,645 h404,472,515,553,615 n421,515,535,628,690 h436,336,406,418,530 c451,400,453,590,615 n469,512,535,604,640 c484,508,568,608,610 c499,570,628,835,838 c517,720,798,820,852 c532,735,822,838,870 c547,829,829,987,1070 c566,988,1062,1150,1193 n580,868,925,1150,1155"],
["e","c625,45,65,248,318 n643,610,828,964,964 n658,522,583,763,763 n673,490,580,611,680 h688,460,514,554,635 r706,590,612,617,685 h721,270,322,677,710 h736,110,220,352,352 h754,165,220,245,280"],
["b","h740,765,965,1083,1090 h755,755,755,953,962 r772,715,718,849,1040 r787,948,948,1028,1072 r802,930,1020,1040,1070 h820,970,992,1076,1135 r835,1000,1002,1140,1200 r850,1165,1176,1226,1345 h868,1035,1120,1247,1250 h883,714,925,1237,1300 r898,888,893,1033,1040 h914,800,1055,1138,1158 h932,545,673,976,980 r947,545,576,680,690 h962,342,391,634,760 h980,282,382,512,520 r995,457,502,675,708 r1010,672,802,820,950 h1027,562,754,802,905 r1043,710,744,862,870 c1058,800,950,966,1050"],
["c","n175,-200,-110,122,198 c190,-200,-114,115,174 c205,37,112,224,420 c222,340,396,675,742 c238,763,796,938,1200 n253,760,796,871,975 c271,975,1036,1108,1145 c286,955,976,1022,1150 h302,598,622,907,907 r316,620,691,697,745 r334,457,568,605,640 r350,565,720,738,800 r365,657,657,833,872 h382,507,589,633,660 h397,485,530,622,660 r412,455,555,559,630 r430,393,412,483,550 h445,432,508,523,570 r460,430,472,575,600 h478,410,530,538,590 h493,412,488,563,590 h508,312,412,472,510 r526,447,447,572,610 h541,555,602,615,648 r556,518,552,569,620 c571,552,552,602,730 c589,610,658,743,805 n604,690,715,790,830 c619,685,700,746,790 c637,760,760,827,858 n652,703,775,817,853 h667,620,649,709,803 h685,502,532,646,680 r700,460,523,548,572 h715,660,682,697,762 r733,700,702,755,775 h748,655,682,703,770 h763,630,644,697,725 r781,660,660,765,790 n796,763,763,793,835 c811,793,793,875,875 c826,818,845,875,890 h844,650,695,790,795 r859,622,628,716,720 r874,715,717,847,855 c892,810,823,851,870 c907,860,868,957,960 n922,850,880,937,1005 h940,780,791,850,885 h955,720,772,790,830 h970,605,713,775,780 r988,718,718,821,825 h1003,620,647,752,770 h1018,430,438,653,660 r1036,258,397,540,545 r1051,465,493,567,665 r1066,555,586,644,700 r1084,540,597,602,640 r1100,535,598,638,665 r1114,620,649,705,720 c1129,695,718,773,790 n1147,763,817,862,880 n1162,720,847,871,875 c1177,750,775,792,810 c1195,785,808,827,840 n1210,735,775,815,820 r1225,745,755,759,820 c1243,760,775,825,830 c1258,815,828,860,872 h1273,633,646,823,830 r1291,695,720,768,820 h1306,685,713,720,770"],
["d","h122,1037,1037,1500,1500 h139,838,962,1060,1070 r155,780,896,900,1025 h170,277,310,737,737 r185,60,190,488,565 h203,340,463,487,640 h218,407,407,452,595 r233,545,556,770,815 h250,715,760,832,940 r265,690,775,827,950 c281,742,810,992,992 c298,880,996,1175,1178 c314,1150,1243,1253,1328 n329,935,985,1210,1235 c346,928,949,1058,1145 c361,1000,1086,1090,1145 c376,1062,1150,1182,1250 c394,1090,1222,1300,1345 c409,1238,1240,1388,1472 n424,1130,1340,1350,1400 n439,1280,1283,1382,1427 c457,1280,1297,1340,1358 c472,1250,1340,1350,1403 n487,1222,1237,1303,1340 h505,1075,1123,1208,1290 r520,1168,1183,1223,1285 r535,1150,1210,1214,1310 c553,1205,1260,1302,1332 h568,1075,1108,1289,1295 r583,948,1077,1090,1108 h601,880,883,1087,1110 r616,795,852,910,1000 r631,832,832,887,1020 h649,642,754,871,885 r664,735,754,877,885 r680,830,895,947,980 h695,890,935,968,1000 r712,865,870,965,1000 c727,868,910,1022,1025 n742,945,1000,1010,1025 c760,950,1024,1037,1045 c775,1012,1032,1067,1165 h790,870,913,1048,1048 c808,845,903,990,1010 n823,985,1000,1010,1070 h838,878,925,956,1020 h856,757,853,905,950 h871,770,790,916,945 h886,543,700,818,880 r904,513,658,731,768 r919,735,781,812,895 h934,532,691,716,800 r952,690,691,807,830 c967,730,803,881,927 n982,785,838,890,933 h997,712,760,826,885 r1015,700,754,791,820 h1030,485,485,737,790 r1045,418,485,524,548 r1063,463,567,570,630 r1078,508,532,632,670 c1094,642,664,782,810 c1112,705,801,903,953 n1127,642,706,857,862 r1142,615,700,735,800 c1160,631,631,802,888 c1175,732,793,800,870"]
];
var LINES=[
{c:"#ffff00",d:"4 3",w:1,p:"a 0,1345 90,1305 185,1260 300,1225 400,1180 520,1130 640,1100 780,1060 960,1025 1100,965 1250,925 1400,880 e 0,810 110,785 210,765 300,725 400,680 490,630 590,590 680,570 800,530 930,510 1020,485 1100,470 c 170,230 300,235 450,247 570,285 700,310 800,325 1000,332 1140,328 d 0,1140 100,1147 250,1127 400,1130 600,1140 850,1120 1000,1095 1100,1078 1170,1070"},
{c:"#ffffff",d:"4 3",w:1,p:"a 5,715 80,680 170,625 260,618 340,615 480,618 530,635 640,638 720,650 790,660 880,720 950,760 1000,790 1100,800 1300,800 1430,780 e 0,710 150,685 200,680 270,630 350,615 420,575 500,548 620,535 760,505 860,460 930,440 1020,375 1090,340 c 170,100 290,112 430,105 600,115 860,130 1000,160 1100,180 d 0,1030 110,1095 230,1130 330,1170 450,1195 580,1220 700,1240 820,1280 900,1290 1000,1250 1100,1205 1170,1185"},
{c:"#0000ff",d:"4 3",w:1,p:"a 5,748 60,758 100,745 165,735 220,712 300,720 400,718 470,695 540,688 640,698 790,698 840,725 910,755 1000,795 1080,800 1140,860 1200,880 1300,878 1420,875 e 0,795 60,755 180,730 250,660 360,520 450,410 570,285 640,240 720,225 800,150 b 880,1000 1000,920 1050,900 1110,900 1180,1000 1260,1100 1390,1260 c 640,230 720,240 790,300 880,400 1000,530 1050,590 1150,690 1200,700 d 150,1475 230,1400 400,1340 550,1310 640,1260 730,1180 860,1125 930,1050 1020,990 1070,935 1120,932 1170,945"},
{c:"#00ff00",w:1,p:"a 5,740 50,640 100,585 140,540 190,492 235,490 265,510 310,517 360,560 395,590 440,610 490,650 530,710 570,810 620,870 670,905 720,895 760,878 830,885 900,895 970,905 1030,870 1090,845 1160,850 1240,870 1320,862 1400,855 e 0,757 40,745 90,720 140,690 190,650 240,530 310,390 350,270 400,120 470,0 b 400,1030 450,920 490,865 540,800 595,768 630,785 700,880 735,900 770,905 820,960 870,1020 900,1050 945,1082 1000,1050 1060,1035 1100,1012 1130,1025 1190,1120 1250,1260 c 375,100 430,170 490,260 530,340 570,470 640,640 690,670 765,625 820,645 860,645 930,695 975,712 1030,725 1130,712 1190,735 1270,755 1320,720 1370,620 1420,490 1470,415 1500,415 d 320,1215 370,1170 440,1135 500,1090 545,1060 590,1025 630,1025 680,1075 740,1108 790,1093 850,1080 900,1010 960,950 1015,910 1070,835 1130,830 1175,815"},
{c:"#ff00ff",w:1,p:"a 5,640 50,560 90,480 155,380 190,360 235,400 270,455 295,490 340,570 385,680 420,770 470,840 520,900 560,930 590,932 650,900 690,870 730,865 780,880 840,900 880,898 930,875 1000,880 1060,875 1130,860 1180,825 1250,823 1300,850 1350,880 1420,870 e 0,755 60,720 110,660 155,600 195,510 240,390 260,320 300,265 345,140 390,0 b 320,1080 380,880 430,730 480,612 530,615 570,660 595,680 620,760 660,900 690,990 730,1080 770,1100 800,1140 840,1180 880,1192 910,1185 945,1080 990,930 1050,868 1090,900 1120,960 1160,1100 1215,1260 c 335,110 375,280 415,450 470,580 525,662 560,640 605,597 650,618 695,597 750,620 820,690 860,700 920,750 990,755 1040,740 1130,725 1200,730 1250,712 1290,718 1340,680 1390,560 1450,330 d 265,1140 320,1040 370,965 425,935 455,960 500,1060 550,1180 580,1200 620,1170 680,1130 740,1070 800,1020 850,980 890,915 930,895 970,898 1020,875 1085,785 1130,745 1175,735"},
{c:"#ffff00",w:1,p:"a 8,470 50,410 100,310 150,260 185,275 235,430 260,590 310,800 345,900 370,950 400,960 440,900 470,865 520,855 570,925 610,968 660,935 700,860 750,785 790,790 840,880 880,970 935,973 965,930 1000,860 1050,780 1100,780 1150,830 1200,870 1270,890 1340,925 1410,915 1430,830 e 0,670 30,590 95,490 150,510 190,470 215,330 250,180 300,0 b 270,960 340,650 365,612 395,605 430,530 470,490 490,495 535,620 565,730 590,830 625,1100 e 660,120 715,370 730,400 770,415 800,300 830,170 b 845,1035 875,1020 900,1035 925,1030 950,960 1000,800 1025,735 1070,725 1105,860 1130,1100 1150,1260 c 265,200 290,450 345,740 375,795 410,730 445,615 490,585 520,535 560,527 640,650 680,675 720,680 750,680 790,680 860,750 920,820 950,820 1000,800 1060,690 1100,632 1150,640 1190,720 1250,780 1300,785 1320,745 d 170,1100 210,950 250,730 275,688 300,710 340,850 370,990 395,1060 430,1190 470,1235 510,1275 550,1280 575,1240 620,1130 690,960 735,915 780,950 835,990 880,950 930,840 985,800 1030,770 1080,695 1110,715 1140,690 1175,695"},
{c:"#ffffff",w:1,p:"a 8,445 25,370 60,290 90,208 135,216 165,290 200,400 235,560 255,780 270,880 290,950 310,990 350,970 390,975 420,900 455,790 480,810 510,900 530,985 560,1045 585,1040 610,1000 640,900 670,790 700,740 760,780 790,880 830,970 860,1010 890,1010 920,960 950,850 1000,790 1040,735 1080,780 1130,800 1170,830 1200,860 1230,850 1270,910 1300,955 1335,960 1380,925 1410,870 1440,720 e 0,480 20,467 50,510 100,515 150,510 180,465 205,350 240,60 b 225,850 245,730 285,733 312,765 340,660 370,490 403,450 440,505 470,540 500,600 530,720 545,800 565,920 580,930 e 620,40 640,200 660,370 680,460 700,600 715,570 735,460 770,270 b 770,1060 800,930 820,930 830,990 870,1030 900,1095 925,1100 945,950 975,680 1000,575 1025,600 1045,700 1060,830 1090,1000 c 215,120 240,370 265,670 285,905 310,880 345,730 370,690 400,640 440,530 470,510 520,505 560,530 590,590 620,650 655,760 690,680 720,632 760,650 800,730 820,780 870,795 900,815 940,860 990,790 1015,690 1040,600 1075,555 1100,600 1130,680 1165,780 1190,810 1240,800 1260,810 1300,700 1330,580 d 130,1400 180,760 218,510 232,487 265,640 285,770 320,1000 345,1095 385,1110 410,1200 440,1280 470,1340 520,1205 560,1205 600,1090 640,920 670,870 720,890 780,1010 820,1000 860,950 890,830 935,745 965,745 1010,790 1040,690 1085,598 1095,600 1130,720 1175,795"},
{c:"#b8b8b8",w:2,p:"a 5,665 50,630 85,605 135,598 190,578 230,590 265,615 330,630 385,672 440,682 480,700 530,735 580,785 650,815 730,800 800,802 880,817 960,820 1060,800 1130,805 1200,835 1300,870 1370,870 1430,850 e 0,778 60,760 110,740 170,715 205,680 270,570 330,480 405,330 455,265 520,160 600,85 640,70 700,100 750,120 810,100 860,115 900,135 950,140 1020,90 1080,55 1125,42 1170,60 1200,100 c 390,0 500,110 560,220 650,380 700,425 760,435 830,478 950,530 1005,572 1090,590 1150,620 1250,690 1320,703 1350,680 1430,540 1480,495 1500,492 d 340,1275 420,1255 510,1215 600,1170 640,1165 700,1180 780,1160 860,1125 930,1050 1020,1000 1070,935 1130,920 1175,893"}
];
var out="";
LINES.forEach(function(l){
  var cur=[0,0],pts=[];
  l.p.split(" ").forEach(function(t){
    if(S[t]){cur=S[t];return}
    var v=t.split(",");
    pts.push([cur[0]+v[0]/3,cur[1]+v[1]/3]);
  });
  pts.sort(function(a,b){return a[0]-b[0]});
  out+='<polyline fill="none" stroke="'+l.c+'" stroke-width="'+l.w+'"'+(l.d?' stroke-dasharray="'+l.d+'"':'')+' points="'+pts.map(function(p){return p[0].toFixed(1)+","+p[1].toFixed(1)}).join(" ")+'"/>';
});
var R="#ff0000",C="#00ffff",BG="#0a0a0a";
BARS.forEach(function(sec){
  var o=S[sec[0]];
  sec[1].split(" ").forEach(function(s){
    var t=s[0],v=s.slice(1).split(",").map(Number);
    var x=Math.round(o[0]+v[0]/3),hi=Math.round(o[1]+v[1]/3),top=Math.round(o[1]+v[2]/3),bot=Math.round(o[1]+v[3]/3),lo=Math.round(o[1]+v[4]/3);
    var col=(t=="r"||t=="h")?R:C;
    var h=Math.max(bot-top,1);
    out+='<rect x="'+x+'" y="'+hi+'" width="1" height="'+Math.max(lo-hi,1)+'" fill="'+col+'"/>';
    if(t=="r"||t=="c"){
      out+='<rect x="'+(x-2)+'" y="'+top+'" width="5" height="'+Math.max(h,2)+'" fill="'+col+'"/>';
    }else{
      out+='<rect x="'+(x-1.5)+'" y="'+(top+.5)+'" width="4" height="'+Math.max(h-1,1)+'" fill="'+BG+'" stroke="'+col+'"/>';
    }
  });
});
var svg=document.getElementById("chart");
svg.setAttribute("shape-rendering","crispEdges");
svg.innerHTML=out;
})();
</script>
</body></html>
